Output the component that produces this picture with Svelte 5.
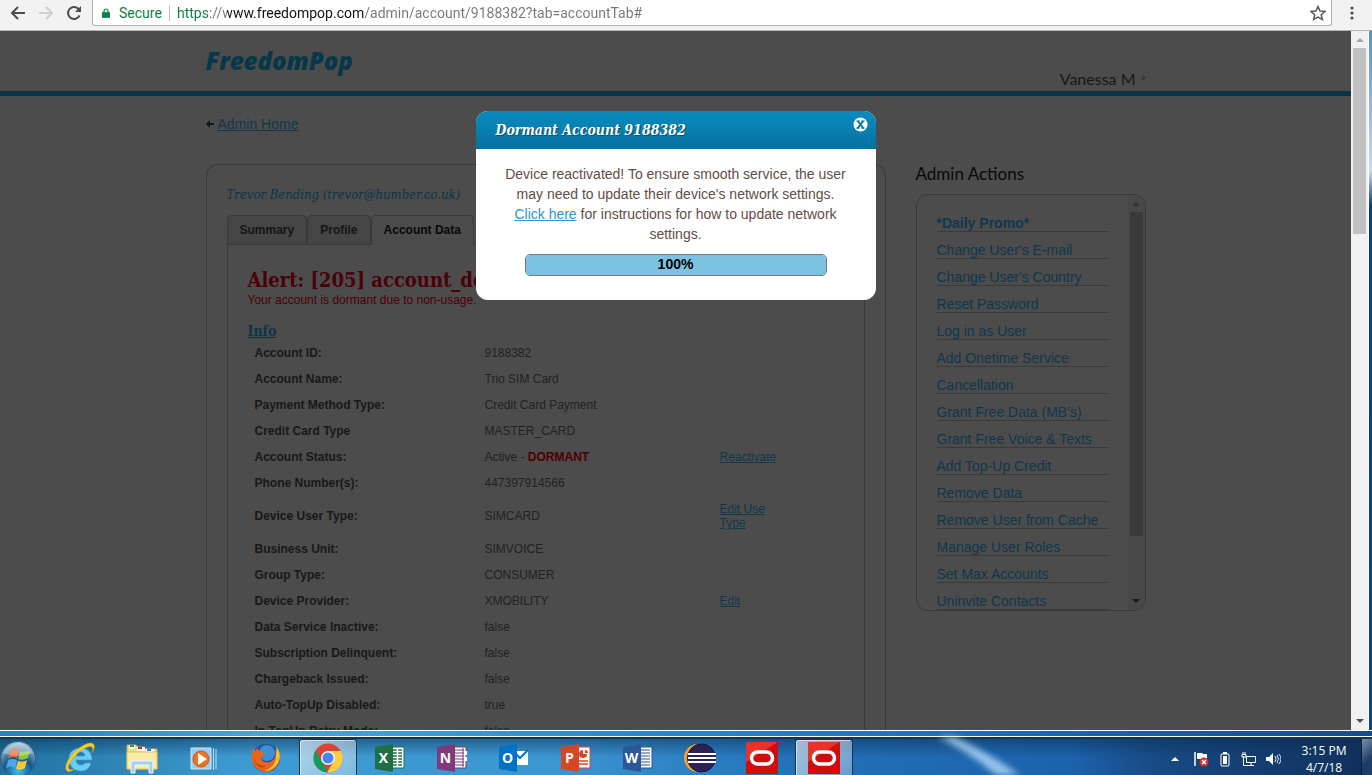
<script>
  const url = 'https://www.freedompop.com/admin/account/9188382?tab=accountTab#';
  const tabs = ['Summary', 'Profile', 'Account Data'];
  let activeTab = $state('Account Data');

  const rows = [
    { label: 'Account ID:', value: '9188382' },
    { label: 'Account Name:', value: 'Trio SIM Card' },
    { label: 'Payment Method Type:', value: 'Credit Card Payment' },
    { label: 'Credit Card Type', value: 'MASTER_CARD' },
    { label: 'Account Status:', value: 'Active - ', flag: 'DORMANT', action: 'Reactivate' },
    { label: 'Phone Number(s):', value: '447397914566' },
    { label: 'Device User Type:', value: 'SIMCARD', action: 'Edit Use Type' },
    { label: 'Business Unit:', value: 'SIMVOICE' },
    { label: 'Group Type:', value: 'CONSUMER' },
    { label: 'Device Provider:', value: 'XMOBILITY', action: 'Edit' },
    { label: 'Data Service Inactive:', value: 'false' },
    { label: 'Subscription Delinquent:', value: 'false' },
    { label: 'Chargeback Issued:', value: 'false' },
    { label: 'Auto-TopUp Disabled:', value: 'true' },
    { label: 'In TopUp Retry Mode:', value: 'false' }
  ];

  const actions = [
    '*Daily Promo*', "Change User's E-mail", "Change User's Country", 'Reset Password',
    'Log in as User', 'Add Onetime Service', 'Cancellation', "Grant Free Data (MB's)",
    'Grant Free Voice & Texts', 'Add Top-Up Credit', 'Remove Data', 'Remove User from Cache',
    'Manage User Roles', 'Set Max Accounts', 'Uninvite Contacts'
  ];

  const apps = [
    { id: 'ie', name: 'Internet Explorer' },
    { id: 'files', name: 'Windows Explorer' },
    { id: 'media', name: 'Media Player' },
    { id: 'firefox', name: 'Firefox' },
    { id: 'chrome', name: 'Chrome', open: true },
    { id: 'office', name: 'Excel', letter: 'X', color: '#1d7044', page: 'grid' },
    { id: 'office', name: 'OneNote', letter: 'N', color: '#80397b', page: 'note' },
    { id: 'office', name: 'Outlook', letter: 'O', color: '#0072c6', page: 'mail' },
    { id: 'office', name: 'PowerPoint', letter: 'P', color: '#d24726', page: 'chart' },
    { id: 'office', name: 'Word', letter: 'W', color: '#2b579a', page: 'lines' },
    { id: 'eclipse', name: 'Eclipse' },
    { id: 'oracle', name: 'Oracle' },
    { id: 'oracle', name: 'Oracle session', open: true }
  ];

  const progress = 100;
</script>

{#snippet appIcon(app)}
  <svg class="app-icon" viewBox="0 0 32 32" aria-hidden="true">
    {#if app.id === 'ie'}
      <path d="M28 18H12c0 3 2 5 5 5 2 0 3-1 4-2h6c-1 5-5 8-10 8C10 29 5 24 5 17S10 6 17 6s11 5 11 12zM12 14h9c0-2.500-2-4-4.500-4S12 11.500 12 14z" fill="#6bcdf6" stroke="#3a9fd8" stroke-width=".7" />
      <path d="M3 29C-1 25 5 14 14 7S29 0 30 3c1 2 0 5-2 8 1-3 1-5 0-6-3-2-10 2-16 8S3 25 5 27c1 1 3 1 6 0-3 2-6 3-8 2z" fill="#f6cf2b" stroke="#c9960f" stroke-width=".5" />
    {:else if app.id === 'files'}
      <path d="M1 3h9l2 2h6l2 2h11v20H1z" fill="#f4dc8a" stroke="#c9a84a" />
      <path d="M3 3h6v4H3z" fill="#fff" /><path d="M4 3h4v2H4z" fill="#23a455" />
      <path d="M11 5h8v4h-8z" fill="#fff" /><path d="M12 5h4v2h-4z" fill="#c8342b" />
      <path d="M20 7h8v4h-8z" fill="#fff" /><path d="M21 7h4v2h-4z" fill="#2a80c9" />
      <path d="M1 10h30v17H1z" fill="#fbeaa6" stroke="#e0bf62" />
      <path d="M5 31V19h22v12h-4v-8H9v8z" fill="#9fd2ee" stroke="#e8f7ff" />
    {:else if app.id === 'media'}
      <path d="M3 6h20v21H3z" fill="#9cc9ee" stroke="#cde6fa" />
      <path d="M25.500 6v22M28 7v20" stroke="#b9dcf7" stroke-width="1" />
      <circle cx="13" cy="17" r="8" fill="#ef7522" stroke="#d35b10" />
      <path d="M10 11l9 6-9 6z" fill="#fff" />
    {:else if app.id === 'firefox'}
      <circle cx="16" cy="16" r="14" fill="#1e4fa3" />
      <circle cx="17" cy="11" r="8" fill="#3f8fd0" />
      <path d="M26 5c4 4 5 9 3 15-3 8-11 12-18 9S0 18 2 12c0-3 1-5 2-6l1 3 3-3c0 2 1 3 3 4l4 1c0 2-2 3-4 4 0 3 2 5 5 5 4 1 6-1 8-3 2-3 2-6 1-9 3 2 3 5 3 7 1-4 0-7-2-10z" fill="#e8661b" />
      <path d="M26 5c5 5 5 13 0 19-3 3-7 5-11 5 7-3 11-8 11-14 0-4 1-6 0-10z" fill="#fbc02d" />
      <path d="M4 15c1 6 5 10 12 9-4 3-11 1-12-9z" fill="#b83516" />
    {:else if app.id === 'chrome'}
      <circle cx="16" cy="16" r="14.500" fill="#db4437" />
      <path d="M3.400 8.800L11 21l5 9.500A14.500 14.500 0 0 1 3.400 8.800z" fill="#0f9d58" />
      <path d="M16 9h12.700A14.500 14.500 0 0 1 15 30.500L22 19z" fill="#ffcd40" />
      <circle cx="16" cy="16" r="7" fill="#f4f4f4" /><circle cx="16" cy="16" r="5.500" fill="#4285f4" />
    {:else if app.id === 'office'}
      {#if app.page === 'mail'}
        <path d="M16 9h14v14H16z" fill="#fff" /><path d="M17 11l5 5 8-8" fill="none" stroke={app.color} stroke-width="2" />
      {:else}
        <path d="M17 5h13v21H17z" fill="#fff" stroke={app.color} stroke-width="1" />
        {#if app.page === 'grid'}
          <path d="M19 8h9M19 11h9M19 14h9M19 17h9M19 20h9M19 23h9" stroke={app.color} stroke-width="1.500" /><path d="M23.500 6v19" stroke="#fff" stroke-width="1.500" />
        {:else if app.page === 'chart'}
          <circle cx="23" cy="12" r="4" fill={app.color} /><path d="M23 12V7h5v5z" fill="#fff" /><path d="M25 11V8a3 3 0 0 1 3 3z" fill={app.color} /><path d="M19 19h9M19 22h9" stroke={app.color} stroke-width="1.500" />
        {:else}
          <path d="M18 8h10M18 11h10M18 14h10M18 17h10M18 20h10M18 23h10" stroke={app.color} stroke-width="1.200" />
          {#if app.page === 'note'}<path d="M27 6v19" stroke={app.color} stroke-width="1" /><path d="M29 9h2v4h-2zM29 15h2v4h-2z" fill="#fff" />{/if}
        {/if}
      {/if}
      <path d="M1 5l18-3v28L1 27z" fill={app.color} />
      <text x="9.500" y="21" text-anchor="middle" font-family="Open Sans, sans-serif" font-weight="700" font-size="14" fill="#fff">{app.letter}</text>
    {:else if app.id === 'eclipse'}
      <circle cx="14" cy="16" r="14" fill="#f0a02c" /><circle cx="17.500" cy="16" r="14" fill="#2c2255" stroke="#171236" />
      <path d="M4 12h28M4 16h28M4 20h28" stroke="#fff" stroke-width="2" />
    {:else}
      <path d="M0 0h32v32H0z" fill="#cf0d0c" /><path d="M0 0h32L0 20z" fill="#e8332b" />
      <rect x="5.500" y="10" width="21" height="12" rx="6" fill="none" stroke="#fff" stroke-width="3.500" />
    {/if}
  </svg>
{/snippet}

<div class="screen">
  <div class="toolbar">
    <button class="nav" aria-label="Back"><svg viewBox="0 0 16 16"><path d="M15 8H2M8 2L2 8l6 6" fill="none" stroke="#4c4c4c" stroke-width="2" /></svg></button>
    <button class="nav" aria-label="Forward"><svg viewBox="0 0 16 16"><path d="M1 8h13M8 2l6 6-6 6" fill="none" stroke="#cfcfcf" stroke-width="2" /></svg></button>
    <button class="nav" aria-label="Reload"><svg viewBox="0 0 16 16"><path d="M13.500 10.500A6 6 0 1 1 12 3.500l1.500 1.500" fill="none" stroke="#4c4c4c" stroke-width="2" /><path d="M15 1v6H9z" fill="#4c4c4c" /></svg></button>
    <div class="omnibox">
      <svg class="lock" viewBox="0 0 10 12" aria-hidden="true"><path d="M0 5h10v7H0z" fill="#0b8043" /><path d="M2.500 6V3.500a2.500 2.500 0 0 1 5 0V6" fill="none" stroke="#0b8043" stroke-width="1.500" /></svg>
      <span class="secure">Secure</span>
      <input class="url" type="text" aria-label="Address" value={url} />
      <button class="star" aria-label="Bookmark"><svg viewBox="0 0 16 16"><path d="M8 1.500l2 4.600 5 .4-3.800 3.200 1.200 4.800L8 12l-4.400 2.500 1.200-4.800L1 6.500l5-.4z" fill="none" stroke="#5a5a5a" stroke-width="1.500" /></svg></button>
    </div>
    <button class="more" aria-label="Menu"><svg viewBox="0 0 4 16"><circle cx="2" cy="3" r="1.600" /><circle cx="2" cy="8" r="1.600" /><circle cx="2" cy="13" r="1.600" /></svg></button>
  </div>

  <div class="viewport">
    <div class="page">
      <header>
        <div class="wrap head">
          <a class="logo" href="#home">FreedomPop</a>
          <button class="user">Vanessa M <svg viewBox="0 0 4 6" aria-hidden="true"><path d="M0 0l4 3-4 3z" /></svg></button>
        </div>
      </header>

      <div class="wrap crumb">
        <svg viewBox="0 0 8 8" aria-hidden="true"><path d="M4 0L0 4l4 4V5h4V3H4z" /></svg><a href="#admin">Admin Home</a>
      </div>

      <div class="wrap columns">
        <main class="card">
          <h2>Trevor Bending (trevor@humber.co.uk)</h2>
          <div class="tabs" role="tablist">
            {#each tabs as tab}
              <button role="tab" aria-selected={tab === activeTab} class:active={tab === activeTab} onclick={() => (activeTab = tab)}>{tab}</button>
            {/each}
          </div>
          <section class="panel">
            <h1>Alert: [205] account_dormant</h1>
            <p class="alert">Your account is dormant due to non-usage.</p>
            <h3>Info</h3>
            <table>
              <tbody>
                {#each rows as row}
                  <tr>
                    <th scope="row">{row.label}</th>
                    <td class="value">{row.value}{#if row.flag}<b>{row.flag}</b>{/if}</td>
                    <td class="action">{#if row.action}<a href="#edit">{row.action}</a>{/if}</td>
                  </tr>
                {/each}
              </tbody>
            </table>
          </section>
        </main>

        <aside>
          <h4>Admin Actions</h4>
          <div class="box">
            <ul>
              {#each actions as action, i}
                <li><a href="#action" class:promo={i === 0}>{action}</a></li>
              {/each}
            </ul>
            <div class="scroll inner" aria-hidden="true">
              <svg viewBox="0 0 8 4"><path d="M0 4l4-4 4 4z" /></svg>
              <div class="track"><div class="thumb"></div></div>
              <svg class="down" viewBox="0 0 8 4"><path d="M0 0l4 4 4-4z" /></svg>
            </div>
          </div>
        </aside>
      </div>

      <div class="modal" role="dialog" aria-labelledby="dialog-title">
        <div class="modal-head">
          <h2 id="dialog-title">Dormant Account 9188382</h2>
          <button aria-label="Close"><svg viewBox="0 0 16 16"><circle cx="8" cy="8" r="7.500" fill="#fff" /><path d="M5 4l6 8M11 4l-6 8" stroke="#0679ab" stroke-width="2.200" /><path d="M3.500 4.200h3.500M9 4.200h3.500M3.500 11.800h3.500M9 11.800h3.500" stroke="#0679ab" stroke-width="1.200" /></svg></button>
        </div>
        <div class="modal-body">
          <p>Device reactivated! To ensure smooth service, the user may need to update their device's network settings. <a href="#instructions">Click here</a> for instructions for how to update network settings.</p>
          <div class="progress" role="progressbar" aria-label="Reactivation" aria-valuenow={progress} aria-valuemin="0" aria-valuemax="100">
            <div class="fill" style="width: {progress}%">{progress}%</div>
          </div>
        </div>
      </div>
    </div>

    <div class="scroll outer" aria-hidden="true">
      <svg viewBox="0 0 8 4"><path d="M0 4l4-4 4 4z" /></svg>
      <div class="track"><div class="thumb"></div></div>
      <svg class="down" viewBox="0 0 8 4"><path d="M0 0l4 4 4-4z" /></svg>
    </div>
    <div class="edge"></div>
  </div>

  <div class="frame"></div>

  <div class="taskbar">
    <svg class="streak" viewBox="0 0 100 38" aria-hidden="true"><path d="M10 0h16q32 14 66 38H68Q40 14 10 0z" fill="#b5dcfa" /></svg>
    <button class="start" aria-label="Start">
      <svg viewBox="0 0 38 38">
        <defs><radialGradient id="orb" cx=".5" cy=".85" r=".8"><stop offset="0" stop-color="#39c1ee" /><stop offset=".5" stop-color="#14568c" /><stop offset="1" stop-color="#9fc1d4" /></radialGradient></defs>
        <circle cx="18" cy="20" r="17.500" fill="url(#orb)" stroke="#315d78" />
        <path d="M11 11q4-3 8 0l-2 8q-4-2-9 0z" fill="#f0652b" /><path d="M20 12q4 2 10-1l-2 8q-5 3-10 1z" fill="#8cc63f" />
        <path d="M8 21q4-2 9 0l-2 8q-4-3-9 0z" fill="#4ba8e8" /><path d="M18 22q5 2 9-1l-2 8q-4 3-9 1z" fill="#fdc82f" />
        <path d="M3 14q15-20 30 0-15 6-30 0z" fill="#fff" opacity=".3" />
      </svg>
    </button>
    {#each apps as app}
      <button class="app" class:open={app.open} aria-label={app.name}>{@render appIcon(app)}</button>
    {/each}
    <div class="tray">
      <button aria-label="Show hidden icons"><svg class="up" viewBox="0 0 8 4"><path d="M0 4l4-4 4 4z" fill="#fff" /></svg></button>
      <button aria-label="Action Center"><svg viewBox="0 0 16 16"><path d="M2 1v14" stroke="#fff" stroke-width="1.500" /><path d="M4 2h5l1 1h4v6H9L8 8H4z" fill="#fff" /><circle cx="11" cy="11" r="4.500" fill="#d9302c" /><path d="M9 9l4 4M13 9l-4 4" stroke="#fff" stroke-width="1.500" /></svg></button>
      <button aria-label="Battery"><svg viewBox="0 0 16 16"><path d="M6 1h4v2H6z" fill="#fff" /><rect x="4" y="3" width="8" height="12" rx="1" fill="none" stroke="#fff" /><path d="M6 5h4v8H6z" fill="#fff" /></svg></button>
      <button aria-label="Network"><svg viewBox="0 0 16 16"><path d="M5.500 5.500h9v6h-9zM7 14.500h6M10 12v2M2.500 5v9.500H7M1 3.500h4V6H1zM2 1v2M4 1v2" fill="none" stroke="#fff" /></svg></button>
      <button aria-label="Volume"><svg viewBox="0 0 16 16"><path d="M1 6h3l4-4v12l-4-4H1z" fill="#fff" /><path d="M10 5q2 3 0 6M12 4q3 4 0 8M14 3q4 5 0 10" fill="none" stroke="#dbe8f5" /></svg></button>
    </div>
    <div class="clock"><span>3:15 PM</span><span>4/7/18</span></div>
    <button class="desktop" aria-label="Show desktop"></button>
  </div>
</div>

<style>
  :global(body) { margin: 0; }
  * { box-sizing: border-box; }
  button { padding: 0; border: 0; background: none; font: inherit; color: inherit; }
  h1, h2, h3, h4, p, ul { margin: 0; padding: 0; }
  svg { display: block; }

  .screen { display: flex; flex-direction: column; height: 100vh; overflow: hidden; font-family: "Liberation Sans", Arial, sans-serif; font-size: 14px; }

  .toolbar { display: flex; align-items: flex-start; height: 31px; flex: none; background: #f2f2f2; border-bottom: 1px solid #b5b5b5; padding-left: 10px; }
  .nav { width: 28px; height: 25px; flex: none; }
  .nav svg { width: 16px; height: 16px; }
  .omnibox { flex: 1; display: flex; align-items: center; height: 26px; margin-left: -2px; padding: 0 5px 0 9px; background: #fff; border: 1px solid #b0b0b0; border-top: 0; border-radius: 0 0 3px 3px; font-family: Roboto, sans-serif; font-size: 14px; }
  .lock { width: 8px; height: 12px; margin-right: 9px; }
  .secure { width: 51px; color: #0b8043; margin-right: 7px; border-right: 1px solid #bbb; line-height: 16px; }
  .url { flex: 1; min-width: 0; height: 22px; padding: 0; border: 0; outline: 0; font: inherit; color: #777; background: linear-gradient(90deg, #0b8043 0 34px, #777 34px 50px, #111 50px 187px, #777 187px); -webkit-background-clip: text; background-clip: text; -webkit-text-fill-color: transparent; }
  .star svg { width: 16px; height: 16px; }
  .more { width: 40px; height: 25px; }
  .more svg { width: 4px; height: 16px; margin: 0 auto; fill: #4c4c4c; }

  .viewport { flex: 1; min-height: 0; display: flex; background: #f1f1f1; }
  .page { flex: 1; min-width: 0; position: relative; overflow: hidden; background: #4c4c4c; color: #181818; }
  .wrap { width: 100%; max-width: 940px; margin: 0 auto; }
  header { border-bottom: 5px solid #0b3547; }
  .head { display: flex; justify-content: space-between; height: 60px; }
  .logo { padding-top: 13px; font: italic 800 24px/34px "Open Sans", sans-serif; color: #07384a; text-decoration: none; }
  .user { display: flex; align-items: center; gap: 6px; height: 20px; margin-top: 37px; font-family: Lato, sans-serif; font-size: 16px; }
  .user svg { width: 4px; height: 6px; fill: #303a3f; }
  a { color: #10374c; }
  .crumb { display: flex; align-items: center; gap: 4px; height: 20px; margin-top: 18px; }
  .crumb svg { width: 8px; height: 8px; fill: #0c1a20; }
  .columns { display: grid; grid-template-columns: minmax(0, 1fr) 230px; gap: 30px; align-items: start; margin-top: 30px; }

  .card { border: 1px solid #393939; border-bottom: 0; border-radius: 12px 12px 0 0; padding: 20px; }
  h1, h2, h3 { font-family: "DejaVu Serif Condensed", "DejaVu Serif", serif; }
  .card h2 { font-size: 13px; line-height: 20px; font-style: italic; font-weight: 400; color: #0b3547; white-space: nowrap; }
  .tabs { display: flex; margin-top: 10px; }
  .tabs button { height: 29px; padding: 0 12px; border: 1px solid #3a3a3a; border-bottom: 0; border-radius: 5px 5px 0 0; background: #454545; font-size: 12px; font-weight: 700; color: #151515; }
  .tabs button.active { background: #4c4c4c; color: #080808; height: 30px; margin-bottom: -1px; padding-bottom: 1px; }
  .panel { border: 1px solid #3a3a3a; border-bottom: 0; padding: 23px 20px 0; }
  h1 { font-size: 20px; line-height: 24px; color: #4a0007; white-space: nowrap; }
  .alert { font-size: 12px; line-height: 16px; color: #4c0008; }
  h3 { margin-top: 14px; font-size: 14px; line-height: 18px; color: #0b3547; text-decoration: underline; }
  table { width: 100%; border-collapse: collapse; table-layout: fixed; font-size: 12px; line-height: 14px; }
  th, td { padding: 6px 7px; text-align: left; }
  th { width: 230px; }
  .value { width: 235px; color: #222; }
  .value b { color: #4c0000; }
  .action { padding-right: 70px; }

  aside { min-width: 0; }
  h4 { font: 400 17px/20px Lato, sans-serif; color: #080808; }
  .box { display: flex; height: 417px; margin-top: 10px; border: 1px solid #393939; border-radius: 12px; overflow: hidden; }
  ul { flex: 1; padding: 20px; list-style: none; }
  li { height: 17px; margin-bottom: 10px; border-bottom: 1px solid #3a3a3a; line-height: 17px; white-space: nowrap; }
  li a { text-decoration: none; }
  .promo { font-weight: 700; }

  .scroll { display: flex; flex-direction: column; align-items: center; flex: none; width: 17px; padding: 7px 2px; }
  .scroll svg { width: 8px; height: 4px; fill: #a3a3a3; }
  .scroll .down { fill: #505050; }
  .track { flex: 1; align-self: stretch; margin: 6px 0; }
  .thumb { background: #c1c1c1; }
  .outer .thumb { height: 28%; }
  .inner { background: #484848; }
  .inner .thumb { height: 85%; background: #3a3a3a; }
  .inner svg { fill: #313131; }
  .inner .down { fill: #181818; }
  .edge { width: 4px; border-left: 1px solid #fff; background: linear-gradient(#5b8fc0, #c5dcef 20%, #0d3c78 25%, #0f4382); }

  .modal { position: absolute; top: 80px; left: 50%; width: 400px; margin-left: -200px; border-radius: 12px; background: #fff; overflow: hidden; }
  .modal-head { display: flex; justify-content: space-between; align-items: flex-start; padding: 6px 8px 6px 20px; height: 38px; background: linear-gradient(#0a8cc0, #05709f); color: #fff; }
  .modal-head h2 { font-size: 14px; line-height: 26px; font-style: italic; font-weight: 700; text-shadow: 1px 1px 1px #03506f; }
  .modal-head svg { width: 15px; height: 15px; }
  .modal-body { padding: 15px 25px 24px; text-align: center; color: #624d47; }
  .modal-body p { line-height: 20px; }
  .modal-body a { color: #3194cb; }
  .progress { width: 302px; height: 22px; margin: 10px auto 0; border: 1px solid #777; border-radius: 5px; overflow: hidden; }
  .fill { height: 100%; background: #7cc2e2; color: #000; font-weight: 700; line-height: 18px; }

  .frame { flex: none; height: 7px; border-top: 1px solid #fff; border-bottom: 1px solid #fff; background: linear-gradient(90deg, #2b80b6, #4ba5d5 20%, #2b83c7 50%, #1e67b2 75%, #164b88); }
  .taskbar { position: relative; flex: none; display: flex; height: 38px; border-top: 2px solid #153451; background: linear-gradient(#0b2d5280, transparent 50%), linear-gradient(90deg, #20719e, #3e9bd2 18%, #3c97d1 40%, #2371b9 58%, #1c62ac 78%, #174b85 84%, #102f59); }
  .streak { position: absolute; left: 928px; top: -2px; width: 100px; height: 38px; filter: blur(3px); opacity: .8; }
  .start { width: 49px; flex: none; }
  .start svg { width: 38px; height: 38px; }
  .app { flex: none; display: flex; justify-content: center; align-items: flex-start; width: 58px; margin: 0 2px; padding-top: 3px; }
  .app.open { border: 1px solid #16354f; border-bottom: 0; border-radius: 3px 3px 0 0; background: linear-gradient(135deg, #e6eef4b0, #ffffff50); box-shadow: inset 1px 1px #ffffff90; padding-top: 2px; }
  .app:last-of-type.open, .app.open + .tray { box-shadow: none; }
  .app-icon { width: 32px; height: 32px; }
  .tray { display: flex; align-items: center; gap: 8px; margin-left: auto; padding-top: 3px; }
  .tray svg { width: 16px; height: 16px; }
  .tray .up { width: 8px; height: 4px; margin: 0 6px; }
  .clock { display: flex; flex-direction: column; align-items: center; justify-content: center; width: 74px; margin-left: 6px; padding-top: 4px; color: #fff; font: 12px/17px "Open Sans", sans-serif; }
  .desktop { width: 11px; border-left: 1px solid #0a1d38; background: linear-gradient(135deg, #7891ad, #1e3d66 60%); }
</style>
